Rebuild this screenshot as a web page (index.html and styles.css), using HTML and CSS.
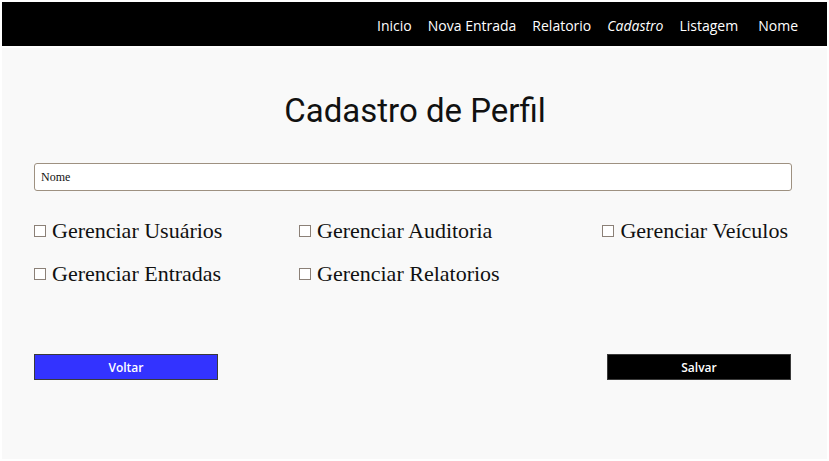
FILE: index.html
```html
<!DOCTYPE html>
<html lang="pt">
<head>
<meta charset="utf-8">
<title>Cadastro de Perfil</title>
<link rel="stylesheet" href="styles.css">
</head>
<body>
<div class="page">
  <nav class="topbar">
    <a class="nav-link" href="#">Inicio</a>
    <a class="nav-link" href="#">Nova Entrada</a>
    <a class="nav-link" href="#">Relatorio</a>
    <a class="nav-link active" href="#">Cadastro</a>
    <a class="nav-link" href="#">Listagem</a>
    <a class="nav-link nav-user" href="#">Nome</a>
  </nav>
  <main class="content">
    <h1 class="title">Cadastro de Perfil</h1>
    <input class="name-input" type="text" placeholder="Nome">
    <div class="perms">
      <label class="perm"><input type="checkbox" class="box"><span>Gerenciar Usuários</span></label>
      <label class="perm"><input type="checkbox" class="box"><span>Gerenciar Auditoria</span></label>
      <label class="perm perm-end"><input type="checkbox" class="box"><span>Gerenciar Veículos</span></label>
      <label class="perm"><input type="checkbox" class="box"><span>Gerenciar Entradas</span></label>
      <label class="perm"><input type="checkbox" class="box"><span>Gerenciar Relatorios</span></label>
    </div>
    <div class="actions">
      <button class="btn btn-back">Voltar</button>
      <button class="btn btn-save">Salvar</button>
    </div>
  </main>
</div>
</body>
</html>
```
FILE: styles.css
```css
html, body {
  margin: 0;
  padding: 0;
  background: #ffffff;
}
.page {
  padding: 2px;
  height: 457px;
  display: flex;
  flex-direction: column;
  gap: 2px;
}
.topbar {
  height: 44px;
  box-sizing: border-box;
  padding-top: 3px;
  background: #000000;
  display: flex;
  justify-content: flex-end;
  align-items: center;
  gap: 16px;
  padding-right: 29px;
  font-family: "Open Sans", sans-serif;
  font-size: 14px;
}
.nav-link {
  color: #ffffff;
  text-decoration: none;
  line-height: 20px;
}
.nav-link.active {
  font-style: italic;
}
.nav-user {
  margin-left: 4px;
}
.content {
  flex: 1;
  background: #f9f9f9;
  padding: 44px 35px 0 32px;
  display: flex;
  flex-direction: column;
}
.title {
  margin: 0;
  padding-left: 4px;
  font-family: Roboto, sans-serif;
  font-weight: 400;
  font-size: 33px;
  line-height: 38px;
  text-align: center;
  color: #111111;
}
.name-input {
  margin: 33px 0 0 0;
  height: 28px;
  box-sizing: border-box;
  border: 1px solid #9e9181;
  border-radius: 3px;
  background: #ffffff;
  padding: 0 6px;
  font-family: "Liberation Serif", serif;
  font-size: 12px;
  color: #000000;
  outline: none;
}
.name-input::placeholder {
  color: #111111;
  opacity: 1;
}
.perms {
  margin-top: 27px;
  display: grid;
  grid-template-columns: 265px 1fr auto;
  row-gap: 18px;
}
.perm {
  display: flex;
  align-items: center;
  gap: 6px;
  font-family: "Liberation Serif", serif;
  font-size: 22px;
  line-height: 25px;
  color: #111111;
}
.perm-end {
  padding-right: 4px;
}
.box {
  appearance: none;
  -webkit-appearance: none;
  margin: 0;
  width: 12px;
  height: 12px;
  border: 1px solid #8b8077;
  background: #ffffff;
  box-sizing: border-box;
  flex: none;
}
.actions {
  margin-top: 68px;
  display: flex;
  justify-content: space-between;
  padding-right: 1px;
}
.btn {
  width: 184px;
  height: 26px;
  box-sizing: border-box;
  border: 1px solid #3a3a3a;
  color: #ffffff;
  font-family: "Open Sans", sans-serif;
  font-weight: 600;
  font-size: 12px;
  padding: 0;
}
.btn-back {
  background: #3333ff;
}
.btn-save {
  background: #000000;
}
```
